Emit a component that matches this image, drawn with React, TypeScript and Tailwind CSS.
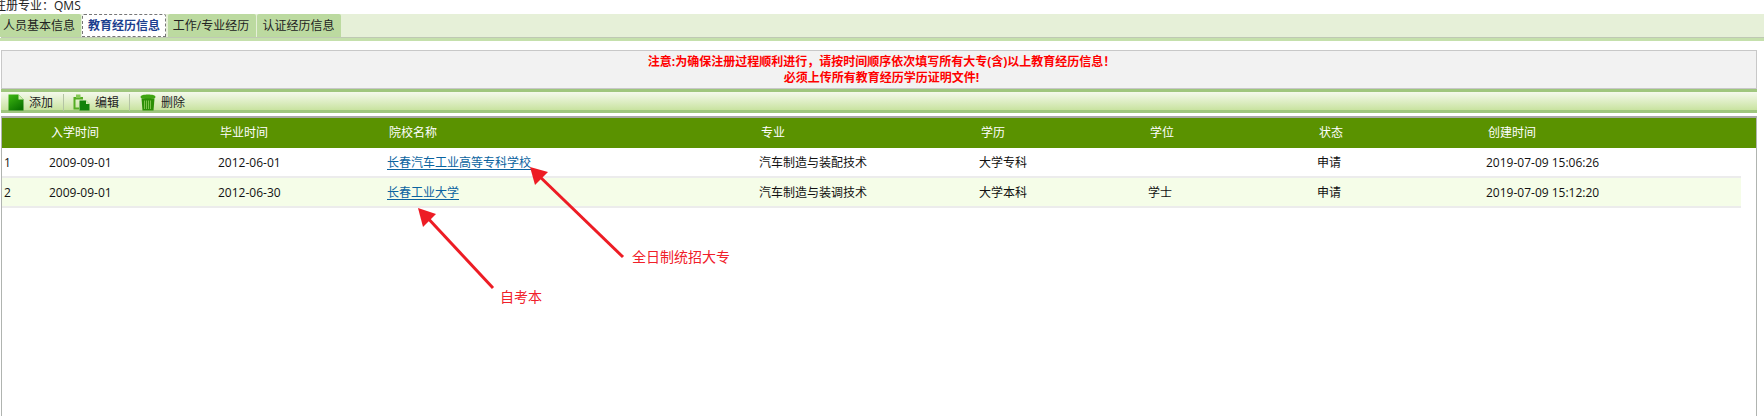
const font = "font-['Open_Sans','Noto_Sans_CJK_SC',sans-serif]";

const tabs = [
  { label: '人员基本信息', className: '-ml-px w-[81px] pr-[3px]' },
  { label: '教育经历信息', className: 'ml-px w-[84px]', active: true },
  { label: '工作/专业经历', className: 'ml-[2px] w-[88px] pr-[2px]' },
  { label: '认证经历信息', className: 'ml-px w-[84px] pr-px' },
];

const columns = ['入学时间', '毕业时间', '院校名称', '专业', '学历', '学位', '状态', '创建时间'];

const rows = [
  ['2009-09-01', '2012-06-01', '长春汽车工业高等专科学校', '汽车制造与装配技术', '大学专科', '', '申请', '2019-07-09 15:06:26'],
  ['2009-09-01', '2012-06-30', '长春工业大学', '汽车制造与装调技术', '大学本科', '学士', '申请', '2019-07-09 15:12:20'],
];

const gridCols = 'grid-cols-[47px_169px_169px_372px_220px_169px_169px_169px_1fr]';

const DocIcon = () => (
  <svg width="16" height="17" viewBox="0 0 16 17">
    <defs>
      <linearGradient id="doc" x1="0" y1="0" x2="0.6" y2="1">
        <stop offset="0" stopColor="#3fb812" />
        <stop offset="1" stopColor="#0c7400" />
      </linearGradient>
    </defs>
    <path d="M0.5 0.5h10l5 5v11H0.5z" fill="url(#doc)" />
    <path d="M10.5 0.5l5 5h-5z" fill="#d4efb4" />
  </svg>
);

const CopyIcon = () => (
  <svg width="17" height="17" viewBox="0 0 17 17">
    <path d="M0.5 3h9.5v2.5H2.5v8h3.500v2H0.5z" fill="#55ad24" />
    <path d="M3 0.5h4.500v3.500H3z" fill="#86c957" />
    <path d="M6.500 6.500h6.500l3.500 3.500v6.500H6.500z" fill="#12820a" />
    <path d="M13 6.500l3.500 3.500H13z" fill="#d4efb4" />
  </svg>
);

const TrashIcon = () => (
  <svg width="16" height="17" viewBox="0 0 16 17">
    <path d="M0.5 3C0.5 1.200 4 0.5 8 0.5S15.500 1.200 15.500 3 12 5 8 5 0.5 4.800 0.5 3z" fill="#3fa512" />
    <path d="M1.500 4.500h13l-1 12h-11z" fill="#2c8f05" />
    <path d="M4.500 6.500v8.500M6.500 6.500v8.500M8.500 6.500v8.500M10.500 6.500v8.500" stroke="#7cc24a" strokeWidth="1" />
  </svg>
);

const Separator = () => <div className="w-px h-[17px] mt-[2px] bg-[#b4c4a4]" />;

const ToolButton = ({ icon, label, className }: { icon: React.ReactNode; label: string; className: string }) => (
  <div className={`flex items-center pt-[3px] ${className}`}>
    {icon}
    <span className="ml-[5px] text-[12px] text-[#222]">{label}</span>
  </div>
);

export default function App() {
  return (
    <div className={`relative h-[416px] w-[1764px] overflow-hidden bg-white text-[12px] ${font}`}>
      <div className="h-[14px] -ml-[6px] text-[12px] leading-[12px] text-[#222]">注册专业：QMS</div>

      <div className="h-[24px] flex bg-[#e6f0d8] border-b border-[#bfc9b4] ml-px">
        {tabs.map((tab) => (
          <div
            key={tab.label}
            className={`${tab.className} h-[23px] flex items-center justify-center rounded-t-[2px] ${
              tab.active
                ? 'bg-white border border-dashed border-[#777] font-bold text-[#1c3f8f]'
                : 'bg-[#bcdaa0] text-[#222]'
            }`}
          >
            {tab.label}
          </div>
        ))}
      </div>
      <div className="h-[3px] bg-[#c5e0ac]" />

      <div className="ml-px mt-[9px] w-[1756px]">
        <div className="h-[39px] border border-[#c8c8c8] bg-[#f2f2f2] flex flex-col items-center justify-center pt-px pl-[5px] text-[12px] leading-[16px] font-bold text-[#ff0000]">
          <div>注意:为确保注册过程顺利进行，请按时间顺序依次填写所有大专(含)以上教育经历信息！</div>
          <div>必须上传所有教育经历学历证明文件!</div>
        </div>

        <div className="h-[24px] border-y-[3px] border-[#9fc67e] bg-gradient-to-b from-[#f5f9ec] to-[#c9e3a0] flex items-center pl-[7px]">
          <ToolButton icon={<DocIcon />} label="添加" className="w-[55px]" />
          <Separator />
          <ToolButton icon={<CopyIcon />} label="编辑" className="w-[65px] pl-[9px]" />
          <Separator />
          <ToolButton icon={<TrashIcon />} label="删除" className="pl-[10px]" />
        </div>

        <div className="mt-[3px] h-[300px] border-t-2 border-x border-[#a8a8a8] border-x-[#b0b4b0]">
          <div className={`grid ${gridCols} h-[30px] items-center bg-[#5a9200] text-white`}>
            <div />
            {columns.map((col) => (
              <div key={col} className="pl-[2px]">{col}</div>
            ))}
          </div>
          {rows.map((row, i) => (
            <div
              key={i}
              className={`grid ${gridCols} h-[30px] w-[1739px] items-center border-b-2 border-[#ececec] pt-[2px] text-[#111] ${
                i === 1 ? 'bg-[#f5fde8]' : 'bg-white'
              }`}
            >
              <div className="pl-[2px]">{i + 1}</div>
              {row.map((cell, j) => (
                <div key={j} className={j === 2 ? 'text-[#0a63a0] underline underline-offset-2' : ''}>
                  {cell}
                </div>
              ))}
            </div>
          ))}
        </div>
      </div>

      {/* annotations drawn over the table */}
      <svg className="absolute left-0 top-0 pointer-events-none" width="1764" height="416">
        <line x1="623" y1="257" x2="536" y2="173" stroke="#ed1c24" strokeWidth="3" />
        <path d="M530 167L548 172L535 185Z" fill="#ed1c24" />
        <line x1="493" y1="288" x2="424" y2="214" stroke="#ed1c24" strokeWidth="3" />
        <path d="M418 208L436 214L423 227Z" fill="#ed1c24" />
      </svg>
      <div className="absolute left-[632px] top-[246px] text-[14px] text-[#f0202a]">全日制统招大专</div>
      <div className="absolute left-[500px] top-[286px] text-[14px] text-[#f0202a]">自考本</div>
    </div>
  );
}
